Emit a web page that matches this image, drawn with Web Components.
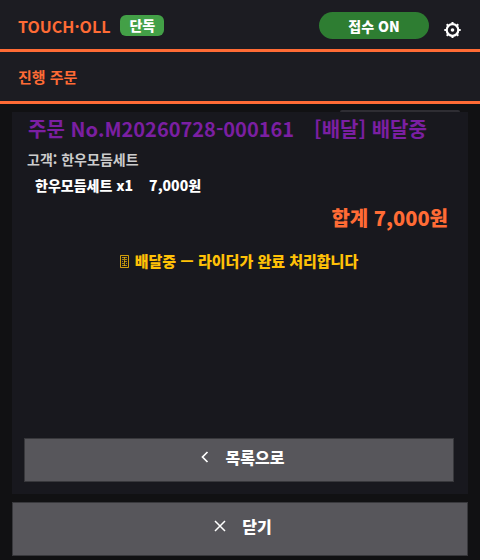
<!DOCTYPE html>
<html lang="ko">
<head>
<meta charset="UTF-8">
<meta name="viewport" content="width=device-width, initial-scale=1">
<title>TOUCH·OLL</title>
<style>
    :root {
        --accent: #ff6b35;
        --bar: #1c1c22;
        --card: #18181e;
        --button: #57565b;
        --button-border: #38383c;
    }
    body {
        margin: 0;
        background: #111113;
        color: #fff;
        font-family: "Noto Sans CJK KR", "Noto Sans", sans-serif;
    }
</style>
</head>
<body>
<order-app></order-app>

<script>
class AppHeader extends HTMLElement {
    constructor() {
        super();
        this.attachShadow({ mode: 'open' });
        this.shadowRoot.innerHTML = `
            <style>
                :host {
                    display: block;
                    background: var(--bar);
                    border-bottom: 3px solid var(--accent);
                }
                header {
                    display: flex;
                    align-items: center;
                    height: 49px;
                    padding: 2px 18px 0;
                    box-sizing: border-box;
                }
                h1 {
                    margin: 0 10px 0 0;
                    font-size: 16px;
                    line-height: 20px;
                    font-weight: 700;
                    color: var(--accent);
                }
                .mode {
                    padding: 0 9px;
                    border-radius: 6px;
                    background: #43a047;
                    font-size: 14px;
                    line-height: 21px;
                    font-weight: 900;
                }
                button {
                    border: 0;
                    padding: 0;
                    color: #fff;
                    font-family: inherit;
                    cursor: pointer;
                }
                .accept {
                    width: 110px;
                    height: 27px;
                    margin-left: auto;
                    border-radius: 14px;
                    background: #2e7d32;
                    font-size: 14px;
                    font-weight: 900;
                }
                .settings {
                    display: flex;
                    margin: 8px 0 0 15px;
                    background: none;
                }
            </style>
            <header>
                <h1>TOUCH·OLL</h1>
                <span class="mode">단독</span>
                <button class="accept" type="button">접수 ON</button>
                <button class="settings" type="button" aria-label="설정">
                    <svg width="18" height="18" viewBox="0 0 18 18" fill="none" stroke="#fff">
                        <circle cx="8.5" cy="9" r="5.8" stroke-width="2.2"/>
                        <path d="M8.5 1v2M8.5 15v2M.3 9h2M14.7 9h2M2.7 3.2l1.4 1.4M12.9 13.4l1.4 1.4M2.7 14.8l1.4-1.4M12.9 4.6l1.4-1.4" stroke-width="2"/>
                        <circle cx="8.5" cy="9" r="1.8" fill="#fff" stroke="none"/>
                    </svg>
                </button>
            </header>
        `;
    }
}

class SectionBar extends HTMLElement {
    constructor() {
        super();
        this.attachShadow({ mode: 'open' });
        this.shadowRoot.innerHTML = `
            <style>
                :host {
                    display: block;
                    background: var(--bar);
                    border-bottom: 3px solid var(--accent);
                }
                h2 {
                    margin: 0;
                    padding: 0 18px;
                    font-size: 15px;
                    line-height: 49px;
                    font-weight: 700;
                    color: var(--accent);
                }
            </style>
            <h2><slot></slot></h2>
        `;
    }
}

class ActionButton extends HTMLElement {
    constructor() {
        super();
        this.attachShadow({ mode: 'open' });
        this.shadowRoot.innerHTML = `
            <style>
                :host {
                    display: block;
                }
                button {
                    display: flex;
                    justify-content: center;
                    align-items: center;
                    gap: 16px;
                    width: 100%;
                    height: var(--button-height, 44px);
                    padding: 0 0 6px 6px;
                    border: 1px solid var(--button-border);
                    background: var(--button);
                    color: #fff;
                    font-family: inherit;
                    font-size: 16px;
                    font-weight: 900;
                    cursor: pointer;
                }
            </style>
            <button type="button">
                <slot name="icon"></slot>
                <span><slot></slot></span>
            </button>
        `;
    }
}

class OrderCard extends HTMLElement {
    constructor() {
        super();
        this.attachShadow({ mode: 'open' });
        this.shadowRoot.innerHTML = `
            <style>
                :host {
                    display: flex;
                    flex-direction: column;
                    padding: 3px 14px 12px 12px;
                    background: var(--card);
                }
                h3, p, ul {
                    margin: 0;
                    padding: 0 4px;
                }
                h3 {
                    display: flex;
                    flex-wrap: wrap;
                    column-gap: 20px;
                    font-size: 20px;
                    line-height: 28px;
                    font-weight: 700;
                    color: #7b1fa2;
                }
                .customer {
                    padding: 3px 3px 0;
                    font-size: 14px;
                    line-height: 26px;
                    font-weight: 700;
                    color: #ccc;
                }
                ul {
                    padding: 0 11px;
                    list-style: none;
                    font-size: 14px;
                    line-height: 26px;
                    font-weight: 900;
                }
                li {
                    display: flex;
                    gap: 16px;
                }
                .total {
                    padding: 4px 6px 0;
                    text-align: right;
                    font-size: 20px;
                    line-height: 32px;
                    font-weight: 900;
                    color: var(--accent);
                }
                .notice {
                    display: flex;
                    justify-content: center;
                    align-items: center;
                    gap: 6px;
                    padding-top: 14px;
                    font-size: 15px;
                    line-height: 26px;
                    font-weight: 900;
                    color: #ffc107;
                }
                action-button {
                    margin-top: auto;
                }
            </style>
            <h3><span>주문 No.M20260728-000161</span> <span>[배달] 배달중</span></h3>
            <p class="customer">고객: 한우모듬세트</p>
            <ul>
                <li><span>한우모듬세트 x1</span><span>7,000원</span></li>
            </ul>
            <p class="total">합계 7,000원</p>
            <p class="notice">
                <svg width="9" height="13" viewBox="0 0 9 13" fill="none" stroke="#ffc107">
                    <path d="M.5.5h8v12h-8z" opacity=".8"/>
                    <path d="M2 2.5h5M2 4.5h2M5 4.5h2M2 6.5h1M4 6.5h3M2 8.5h2M6 8.5h1M2 10.5h5M4.5 2v9" opacity=".65"/>
                </svg>
                <span>배달중 — 라이더가 완료 처리합니다</span>
            </p>
            <action-button>
                <svg slot="icon" width="10" height="12" viewBox="0 0 10 12" fill="none" stroke="#fff" stroke-width="1.7">
                    <path d="M7.5 1L2.5 6l5 5"/>
                </svg>
                목록으로
            </action-button>
        `;
    }
}

class OrderApp extends HTMLElement {
    constructor() {
        super();
        this.attachShadow({ mode: 'open' });
        this.shadowRoot.innerHTML = `
            <style>
                :host {
                    display: flex;
                    flex-direction: column;
                    min-height: 100vh;
                }
                main {
                    flex: 1;
                    display: flex;
                    flex-direction: column;
                    padding: 6px 12px 4px;
                }
                .edge {
                    align-self: flex-end;
                    width: 120px;
                    height: 2px;
                    margin-right: 8px;
                    border-radius: 2px 2px 0 0;
                    background: #2e2d33;
                }
                order-card {
                    flex: 1;
                }
                .close {
                    --button-height: 54px;
                    margin-top: 8px;
                }
            </style>
            <app-header></app-header>
            <section-bar>진행 주문</section-bar>
            <main>
                <div class="edge"></div>
                <order-card></order-card>
                <action-button class="close">
                    <svg slot="icon" width="12" height="12" viewBox="0 0 12 12" fill="none" stroke="#fff" stroke-width="1.5">
                        <path d="M1 1l10 10M11 1L1 11"/>
                    </svg>
                    닫기
                </action-button>
            </main>
        `;
    }
}

customElements.define('app-header', AppHeader);
customElements.define('section-bar', SectionBar);
customElements.define('action-button', ActionButton);
customElements.define('order-card', OrderCard);
customElements.define('order-app', OrderApp);
</script>
</body>
</html>
